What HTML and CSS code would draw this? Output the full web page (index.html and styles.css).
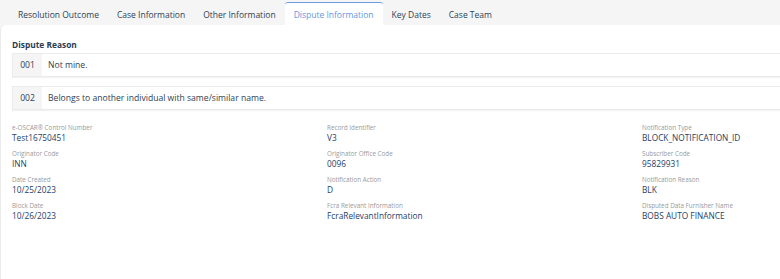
FILE: index.html
```html
<!DOCTYPE html>
<html>
<head>
<meta charset="utf-8">
<link rel="stylesheet" href="styles.css">
</head>
<body>
<div class="tabs">
  <div class="tab">Resolution Outcome</div>
  <div class="tab">Case Information</div>
  <div class="tab">Other Information</div>
  <div class="tab active">Dispute Information</div>
  <div class="tab">Key Dates</div>
  <div class="tab">Case Team</div>
</div>
<div class="panel">
  <div class="heading">Dispute Reason</div>
  <div class="reasons">
    <div class="reason"><span class="code">001</span><span class="desc">Not mine.</span></div>
    <div class="reason"><span class="code">002</span><span class="desc">Belongs to another individual with same/similar name.</span></div>
  </div>
  <div class="fields">
    <div class="field"><div class="label">e-OSCAR® Control Number</div><div class="value">Test16750451</div></div>
    <div class="field"><div class="label">Record Identifier</div><div class="value">V3</div></div>
    <div class="field"><div class="label">Notification Type</div><div class="value">BLOCK_NOTIFICATION_ID</div></div>
    <div class="field"><div class="label">Originator Code</div><div class="value">INN</div></div>
    <div class="field"><div class="label">Originator Office Code</div><div class="value">0096</div></div>
    <div class="field"><div class="label">Subscriber Code</div><div class="value">95829931</div></div>
    <div class="field"><div class="label">Date Created</div><div class="value">10/25/2023</div></div>
    <div class="field"><div class="label">Notification Action</div><div class="value">D</div></div>
    <div class="field"><div class="label">Notification Reason</div><div class="value">BLK</div></div>
    <div class="field"><div class="label">Block Date</div><div class="value">10/26/2023</div></div>
    <div class="field"><div class="label">Fcra Relevant Information</div><div class="value">FcraRelevantInformation</div></div>
    <div class="field"><div class="label">Disputed Data Furnisher Name</div><div class="value">BOBS AUTO FINANCE</div></div>
  </div>
</div>
</body>
</html>
```
FILE: styles.css
```css
html, body {
  margin: 0;
  padding: 0;
}
body {
  background: #f5f5f5;
  font-family: "Open Sans", "DejaVu Sans", sans-serif;
  width: 780px;
  height: 279px;
  overflow: hidden;
}
.tabs {
  display: flex;
  height: 25px;
  padding: 0 0 0 9px;
  align-items: stretch;
}
.tab {
  padding: 3px 9px 0;
  font-size: 8.5px;
  font-weight: 500;
  color: #2e4256;
  display: flex;
  align-items: center;
  white-space: nowrap;
}
.tab.active {
  background: #fff;
  color: #6497dd;
  border-top: 1px solid #6d9be0;
  margin-top: 2px;
  padding-top: 0;
  border-radius: 3px 3px 0 0;
}
.panel {
  background: #fff;
  border-left: 1px solid #ececec;
  border-top-left-radius: 6px;
  height: 254px;
  padding: 14px 0 0 11px;
  box-sizing: border-box;
  width: 1000px;
}
.heading {
  font-size: 8.4px;
  font-weight: 700;
  color: #2b3d52;
  height: 12px;
  line-height: 12px;
}
.reasons {
  display: flex;
  flex-direction: column;
  gap: 9px;
  margin-top: 2px;
}
.reason {
  display: flex;
  height: 22px;
  border: 1px solid #ebebeb;
  box-shadow: 0 1px 1px rgba(0,0,0,0.05);
  font-size: 8.6px;
  color: #2e4256;
  align-items: stretch;
}
.code {
  width: 29px;
  background: #f5f5f5;
  display: flex;
  align-items: center;
  justify-content: center;
}
.desc {
  display: flex;
  align-items: center;
  padding-left: 6px;
}
.fields {
  display: grid;
  grid-template-columns: 315px 315px 315px;
  row-gap: 6px;
  margin-top: 13px;
}
.label {
  font-size: 6.3px;
  color: #9a9a9a;
  line-height: 9px;
}
.value {
  font-size: 8.3px;
  font-weight: 500;
  color: #1f3d66;
  line-height: 11px;
}
```
